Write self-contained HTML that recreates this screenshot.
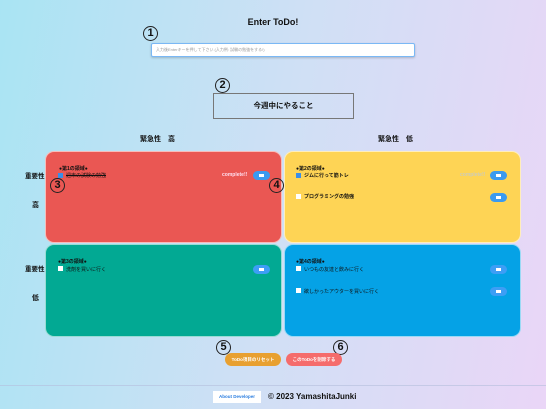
<!DOCTYPE html>
<html><head><meta charset="utf-8"><style>
*{margin:0;padding:0;box-sizing:border-box}
body{width:546px;height:409px;overflow:hidden;position:relative;background:linear-gradient(100deg,#a9e4f3 0%,#cfe0f5 50%,#ead6f7 100%);font-family:"Liberation Sans","Noto Sans CJK JP",sans-serif;color:#111}
.a{position:absolute}
.num{position:absolute;width:15px;height:15px;border:1.3px solid #222;border-radius:50%;font-size:11px;font-weight:bold;text-align:center;line-height:13px}
.box{position:absolute;border-radius:9px;border:1px solid rgba(255,255,255,.6)}
.t{position:absolute;font-size:5px;font-weight:bold;white-space:nowrap}
.cb{position:absolute;width:5px;height:5px;background:#fff}
.cbc{background:#3a8ee8}
.btn{position:absolute;width:17px;height:9px;border-radius:5px;background:#3b9af0}
.btn:after{content:"";position:absolute;left:6px;top:3px;width:5px;height:3px;background:#fff}
.lbl{position:absolute;font-size:7px;font-weight:bold;white-space:nowrap}
</style></head><body>
<div class="a" style="left:0;top:17px;width:546px;text-align:center;font-size:9px;font-weight:bold">Enter ToDo!</div>
<div class="num" style="left:143px;top:26px">1</div>
<div class="a" style="left:151px;top:43px;width:264px;height:14px;background:#fff;border:1px solid #7ab8f5;border-radius:2px;box-shadow:0 1px 2px rgba(0,0,0,.2);font-size:4px;color:#999;padding:3px 4px">入力後Enterキーを押して下さい (入力例: 試験の勉強をする!)</div>
<div class="num" style="left:215px;top:78px">2</div>
<div class="a" style="left:213px;top:93px;width:141px;height:26px;border:1px solid #777;text-align:center;line-height:24px;font-size:7.5px;font-weight:bold">今週中にやること</div>
<div class="lbl" style="left:140px;top:134px">緊急性　高</div>
<div class="lbl" style="left:378px;top:134px">緊急性　低</div>
<div class="lbl" style="left:25px;top:170px;font-size:6.5px">重要性</div>
<div class="lbl" style="left:32px;top:200px">高</div>
<div class="lbl" style="left:25px;top:263px;font-size:6.5px">重要性</div>
<div class="lbl" style="left:32px;top:293px">低</div>
<div class="box" style="left:45px;top:151px;width:237px;height:92px;background:#ea5753"></div>
<div class="box" style="left:284px;top:151px;width:237px;height:92px;background:#fed455"></div>
<div class="box" style="left:45px;top:244px;width:237px;height:93px;background:#02a993"></div>
<div class="box" style="left:284px;top:244px;width:237px;height:93px;background:#05a2e6"></div>
<div class="t" style="left:59px;top:165px">●第1の領域●</div>
<div class="cb cbc" style="left:58px;top:173px"></div>
<div class="t" style="left:66px;top:172px;text-decoration:line-through;font-weight:normal">週末の試験の勉強</div>
<div class="t" style="left:222px;top:172px;color:#fde">complete!!</div>
<div class="btn" style="left:253px;top:171px"></div>
<div class="num" style="left:50px;top:178px">3</div>
<div class="num" style="left:269px;top:178px">4</div>
<div class="t" style="left:296px;top:165px">●第2の領域●</div>
<div class="cb cbc" style="left:296px;top:173px"></div>
<div class="t" style="left:304px;top:172px">ジムに行って筋トレ</div>
<div class="t" style="left:460px;top:172px;color:#ccb">complete!!</div>
<div class="btn" style="left:490px;top:171px"></div>
<div class="cb" style="left:296px;top:194px"></div>
<div class="t" style="left:304px;top:193px">プログラミングの勉強</div>
<div class="btn" style="left:490px;top:193px"></div>
<div class="t" style="left:58px;top:258px">●第3の領域●</div>
<div class="cb" style="left:58px;top:266px"></div>
<div class="t" style="left:66px;top:266px;font-weight:normal">洗剤を買いに行く</div>
<div class="btn" style="left:253px;top:265px;background:#3d9ef5"></div>
<div class="t" style="left:296px;top:258px">●第4の領域●</div>
<div class="cb" style="left:296px;top:266px"></div>
<div class="t" style="left:304px;top:266px;font-weight:normal">いつもの友達と飲みに行く</div>
<div class="btn" style="left:490px;top:265px;background:#3d9ef5"></div>
<div class="cb" style="left:296px;top:288px"></div>
<div class="t" style="left:304px;top:288px;font-weight:normal">欲しかったアウターを買いに行く</div>
<div class="btn" style="left:490px;top:287px;background:#3d9ef5"></div>
<div class="num" style="left:216px;top:340px">5</div>
<div class="num" style="left:333px;top:340px">6</div>
<div class="a" style="left:225px;top:353px;width:56px;height:13px;border-radius:7px;background:#e8a030;color:#fff;font-size:4.5px;font-weight:bold;text-align:center;line-height:13px">ToDo項目のリセット</div>
<div class="a" style="left:286px;top:353px;width:56px;height:13px;border-radius:7px;background:#f56c6c;color:#fff;font-size:4.5px;font-weight:bold;text-align:center;line-height:13px">このToDoを削除する</div>
<div class="a" style="left:0;top:385px;width:546px;height:1px;background:rgba(180,190,220,.6)"></div>
<div class="a" style="left:213px;top:391px;width:48px;height:12px;background:#fff;color:#2a7de0;font-size:4.5px;font-weight:bold;text-align:center;line-height:12px">About Developer</div>
<div class="a" style="left:268px;top:391px;font-size:8px;font-weight:bold;line-height:12px">© 2023 YamashitaJunki</div>
</body></html>
